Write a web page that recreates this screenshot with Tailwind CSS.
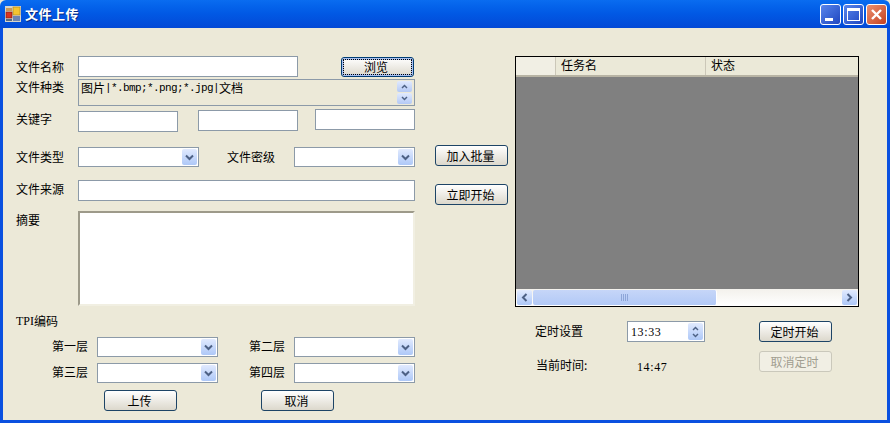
<!DOCTYPE html>
<html lang="zh-CN">

<head>
  <meta charset="UTF-8">
  <title>文件上传</title>
  <script src="https://cdn.jsdelivr.net/npm/@tailwindcss/browser@4"></script>
</head>

<body class="bg-[#ece9d8] text-black text-[12px] leading-[14px] font-['Noto_Sans_CJK_SC',sans-serif] overflow-hidden">

  <!-- shared glyphs -->
  <svg class="hidden">
    <symbol id="chev-down" viewBox="0 0 9 7">
      <path d="M1 1.5 L4.5 5 L8 1.5" fill="none" stroke="#4d6185" stroke-width="2" />
    </symbol>
    <symbol id="chev-up" viewBox="0 0 9 7">
      <path d="M1 5.5 L4.5 2 L8 5.5" fill="none" stroke="#4d6185" stroke-width="2" />
    </symbol>
  </svg>

  <div class="w-[890px] h-[423px] flex flex-col">

    <!-- Title bar -->
    <div class="h-[28px] flex items-center pl-[5px] pr-[3px] bg-linear-to-b from-[#0a6cf0] via-[#0158e4] to-[#0349d6] rounded-t-[6px]">
      <svg class="w-[16px] h-[16px]" viewBox="0 0 16 16">
        <rect x="0" y="0" width="16" height="16" fill="#d8d4c8" />
        <rect x="1" y="2" width="6" height="3" fill="#c89a5a" />
        <rect x="8" y="1" width="7" height="8" fill="#f4c430" stroke="#a8801c" stroke-width="0.6" />
        <rect x="1" y="6" width="6" height="6" fill="#d8331f" stroke="#7a1a10" stroke-width="0.6" />
        <rect x="8" y="10" width="7" height="5" fill="#6d84b0" />
        <rect x="1" y="13" width="6" height="2" fill="#5a6a80" />
      </svg>
      <span class="ml-[4px] text-[13px] font-bold tracking-[0.5px] text-white [text-shadow:1px_1px_0_#0a2a80]">文件上传</span>

      <div class="ml-auto flex gap-[2px]">
        <div class="w-[21px] h-[21px] rounded-[3px] border border-white bg-linear-to-br from-[#5a85ec] to-[#1f45c0] flex items-end pl-[4px] pb-[3px]">
          <div class="w-[8px] h-[3px] bg-white"></div>
        </div>
        <div class="w-[21px] h-[21px] rounded-[3px] border border-white bg-linear-to-br from-[#5a85ec] to-[#1f45c0] flex items-center justify-center">
          <div class="w-[13px] h-[13px] border border-white border-t-[3px]"></div>
        </div>
        <div class="w-[21px] h-[21px] rounded-[3px] border border-white bg-linear-to-br from-[#ec9070] to-[#c4401c] flex items-center justify-center">
          <svg class="w-[13px] h-[13px]" viewBox="0 0 13 13">
            <path d="M2 2 L11 11 M11 2 L2 11" stroke="#fff" stroke-width="2.4" />
          </svg>
        </div>
      </div>
    </div>

    <!-- Window body -->
    <div class="flex-1 flex border-x-[3px] border-b-[3px] border-[#0a50e0]">

      <!-- Form column -->
      <div class="w-[412px] pl-[13px] pt-[28px] shrink-0">
        <div class="flex items-start h-[21px]">
          <span class="w-[62px] mt-[4px]">文件名称</span>
          <input class="w-[220px] h-[21px] bg-white border border-[#8c9aa8]">
          <button class="ml-[43px] mt-[1px] w-[73px] h-[20px] pr-[3px] rounded-[3px] border border-[#003c74] bg-linear-to-b from-white to-[#dcd8cc] shadow-[inset_0_0_0_2px_#a9c0ef] outline-1 outline-dotted -outline-offset-3 outline-black">浏览</button>
        </div>

        <div class="flex items-start h-[27px] mt-[2px]">
          <span class="w-[62px] mt-[1px]">文件种类</span>
          <div class="w-[337px] h-[27px] border border-[#8c9aa8] bg-[#ece9d8] flex justify-between pl-[2px] pr-[2px]">
            <div class="mt-[1px] flex items-start">图片<span class="font-['Liberation_Mono',monospace] text-[11px] tracking-[-0.6px]">|*.bmp;*.png;*.jpg|</span>文档</div>
            <div class="flex flex-col gap-[1px] pt-[1px]">
              <div class="w-[15px] h-[11px] rounded-[2px] bg-linear-to-b from-[#e1eafe] to-[#b4c9f5] flex items-center justify-center"><svg class="w-[7px] h-[5px]"><use href="#chev-up" /></svg></div>
              <div class="w-[15px] h-[11px] rounded-[2px] bg-linear-to-b from-[#e1eafe] to-[#b4c9f5] flex items-center justify-center"><svg class="w-[7px] h-[5px]"><use href="#chev-down" /></svg></div>
            </div>
          </div>
        </div>

        <div class="flex items-start h-[23px] mt-[3px]">
          <span class="w-[62px] mt-[3px]">关键字</span>
          <input class="w-[100px] h-[21px] mt-[2px] bg-white border border-[#8c9aa8]">
          <input class="w-[100px] h-[21px] mt-[1px] ml-[20px] bg-white border border-[#8c9aa8]">
          <input class="w-[100px] h-[21px] ml-[17px] bg-white border border-[#8c9aa8]">
        </div>

        <div class="flex items-center h-[20px] mt-[15px]">
          <span class="w-[62px] mb-[1px]">文件类型</span>
          <div class="w-[121px] h-[20px] bg-white border border-[#8c9aa8] flex justify-end p-[1px]">
            <div class="w-[15px] rounded-[2px] bg-linear-to-b from-[#e1eafe] to-[#aec8f7] flex items-center justify-center"><svg class="w-[9px] h-[7px]"><use href="#chev-down" /></svg></div>
          </div>
          <span class="ml-[28px] w-[67px] mb-[1px]">文件密级</span>
          <div class="w-[121px] h-[20px] bg-white border border-[#8c9aa8] flex justify-end p-[1px]">
            <div class="w-[15px] rounded-[2px] bg-linear-to-b from-[#e1eafe] to-[#aec8f7] flex items-center justify-center"><svg class="w-[9px] h-[7px]"><use href="#chev-down" /></svg></div>
          </div>
        </div>

        <div class="flex items-start h-[21px] mt-[13px]">
          <span class="w-[62px] mt-[2px]">文件来源</span>
          <input class="w-[337px] h-[21px] bg-white border border-[#8c9aa8]">
        </div>

        <div class="flex items-start h-[95px] mt-[10px]">
          <span class="w-[62px] mt-[2px]">摘要</span>
          <div class="w-[337px] h-[95px] bg-white border-[2px] border-b-[#f1efe2] border-r-[#f1efe2] border-t-[#9d9a8a] border-l-[#9d9a8a]"></div>
        </div>

        <div class="mt-[8px] h-[14px] flex items-center"><span class="font-['Liberation_Serif',serif]">TPI</span>编码</div>

        <div class="flex items-center h-[20px] mt-[9px] pl-[36px]">
          <span class="w-[45px] mb-[2px]">第一层</span>
          <div class="w-[121px] h-[20px] bg-white border border-[#8c9aa8] flex justify-end p-[1px]">
            <div class="w-[15px] rounded-[2px] bg-linear-to-b from-[#e1eafe] to-[#aec8f7] flex items-center justify-center"><svg class="w-[9px] h-[7px]"><use href="#chev-down" /></svg></div>
          </div>
          <span class="ml-[31px] w-[45px] mb-[2px]">第二层</span>
          <div class="w-[121px] h-[20px] bg-white border border-[#8c9aa8] flex justify-end p-[1px]">
            <div class="w-[15px] rounded-[2px] bg-linear-to-b from-[#e1eafe] to-[#aec8f7] flex items-center justify-center"><svg class="w-[9px] h-[7px]"><use href="#chev-down" /></svg></div>
          </div>
        </div>

        <div class="flex items-center h-[20px] mt-[6px] pl-[36px]">
          <span class="w-[45px] mb-[2px]">第三层</span>
          <div class="w-[121px] h-[20px] bg-white border border-[#8c9aa8] flex justify-end p-[1px]">
            <div class="w-[15px] rounded-[2px] bg-linear-to-b from-[#e1eafe] to-[#aec8f7] flex items-center justify-center"><svg class="w-[9px] h-[7px]"><use href="#chev-down" /></svg></div>
          </div>
          <span class="ml-[31px] w-[45px] mb-[2px]">第四层</span>
          <div class="w-[121px] h-[20px] bg-white border border-[#8c9aa8] flex justify-end p-[1px]">
            <div class="w-[15px] rounded-[2px] bg-linear-to-b from-[#e1eafe] to-[#aec8f7] flex items-center justify-center"><svg class="w-[9px] h-[7px]"><use href="#chev-down" /></svg></div>
          </div>
        </div>

        <div class="flex mt-[7px] pl-[88px]">
          <button class="w-[73px] h-[21px] pr-[2px] rounded-[3px] border border-[#1d4466] bg-linear-to-b from-white to-[#dcd8cc]">上传</button>
          <button class="ml-[84px] w-[73px] h-[21px] pr-[2px] rounded-[3px] border border-[#1d4466] bg-linear-to-b from-white to-[#dcd8cc]">取消</button>
        </div>
      </div>

      <!-- Middle buttons -->
      <div class="ml-[20px] w-[73px] pt-[117px] flex flex-col gap-[18px] shrink-0">
        <button class="h-[21px] pr-[2px] rounded-[3px] border border-[#1d4466] bg-linear-to-b from-white to-[#dcd8cc]">加入批量</button>
        <button class="h-[21px] pr-[2px] rounded-[3px] border border-[#1d4466] bg-linear-to-b from-white to-[#dcd8cc]">立即开始</button>
      </div>

      <!-- Task grid and timer -->
      <div class="ml-[7px] w-[344px] pt-[28px] shrink-0">
        <div class="h-[251px] border border-black bg-[#808080] flex flex-col">
          <div class="h-[20px] flex bg-[#ebe9d8] border-b-2 border-[#b8b4a4]">
            <div class="w-[40px] border-r border-[#cbc7b8] bg-[#f1efe4]"></div>
            <div class="w-[150px] pl-[5px] pt-[1px] border-r border-[#cbc7b8]">任务名</div>
            <div class="pl-[5px] pt-[1px]">状态</div>
          </div>
          <div class="flex-1"></div>
          <div class="h-[17px] flex items-center bg-linear-to-b from-[#f3f1ec] to-white px-[1px]">
            <div class="w-[15px] h-[15px] rounded-[2px] bg-linear-to-b from-[#e1eafe] to-[#aec8f7] flex items-center justify-center"><svg class="w-[7px] h-[9px]" viewBox="0 0 7 9"><path d="M5.5 1 L2 4.5 L5.5 8" fill="none" stroke="#4d6185" stroke-width="2" /></svg></div>
            <div class="ml-[1px] w-[184px] h-[15px] rounded-[2px] border-r border-white bg-linear-to-b from-[#c6d6f8] to-[#b2c9f6] flex items-center justify-center gap-[1px]">
              <div class="w-[1px] h-[7px] bg-[#8ea6d8]"></div><div class="w-[1px] h-[7px] bg-[#8ea6d8]"></div><div class="w-[1px] h-[7px] bg-[#8ea6d8]"></div><div class="w-[1px] h-[7px] bg-[#8ea6d8]"></div>
            </div>
            <div class="ml-auto w-[15px] h-[15px] rounded-[2px] bg-linear-to-b from-[#e1eafe] to-[#aec8f7] flex items-center justify-center"><svg class="w-[7px] h-[9px]" viewBox="0 0 7 9"><path d="M1.5 1 L5 4.5 L1.5 8" fill="none" stroke="#4d6185" stroke-width="2" /></svg></div>
          </div>
        </div>

        <div class="flex items-center h-[21px] mt-[14px] pl-[20px]">
          <span class="w-[92px] mb-[1px]">定时设置</span>
          <div class="w-[78px] h-[21px] bg-white border border-[#8c9aa8] flex items-center justify-between pl-[3px] pr-[1px]">
            <span class="font-['Liberation_Serif',serif] tracking-[0.6px]">13:33</span>
            <div class="w-[15px] h-[17px] rounded-[2px] bg-linear-to-b from-[#e1eafe] to-[#aec8f7] flex flex-col items-center justify-center gap-[2px]">
              <svg class="w-[7px] h-[5px]"><use href="#chev-up" /></svg>
              <svg class="w-[7px] h-[5px]"><use href="#chev-down" /></svg>
            </div>
          </div>
          <button class="ml-[54px] w-[73px] h-[21px] pr-[2px] rounded-[3px] border border-[#1d4466] bg-linear-to-b from-white to-[#dcd8cc]">定时开始</button>
        </div>

        <div class="flex items-start h-[21px] mt-[9px] pl-[21px]">
          <span class="w-[101px] mt-[7px]">当前时间:</span>
          <span class="w-[122px] mt-[9px] font-['Liberation_Serif',serif] tracking-[0.6px]">14:47</span>
          <button class="w-[73px] h-[21px] pr-[2px] rounded-[3px] border border-[#cac8bb] bg-[#f1efe4] text-[#a19e90]">取消定时</button>
        </div>
      </div>
    </div>
  </div>

</body>

</html>
